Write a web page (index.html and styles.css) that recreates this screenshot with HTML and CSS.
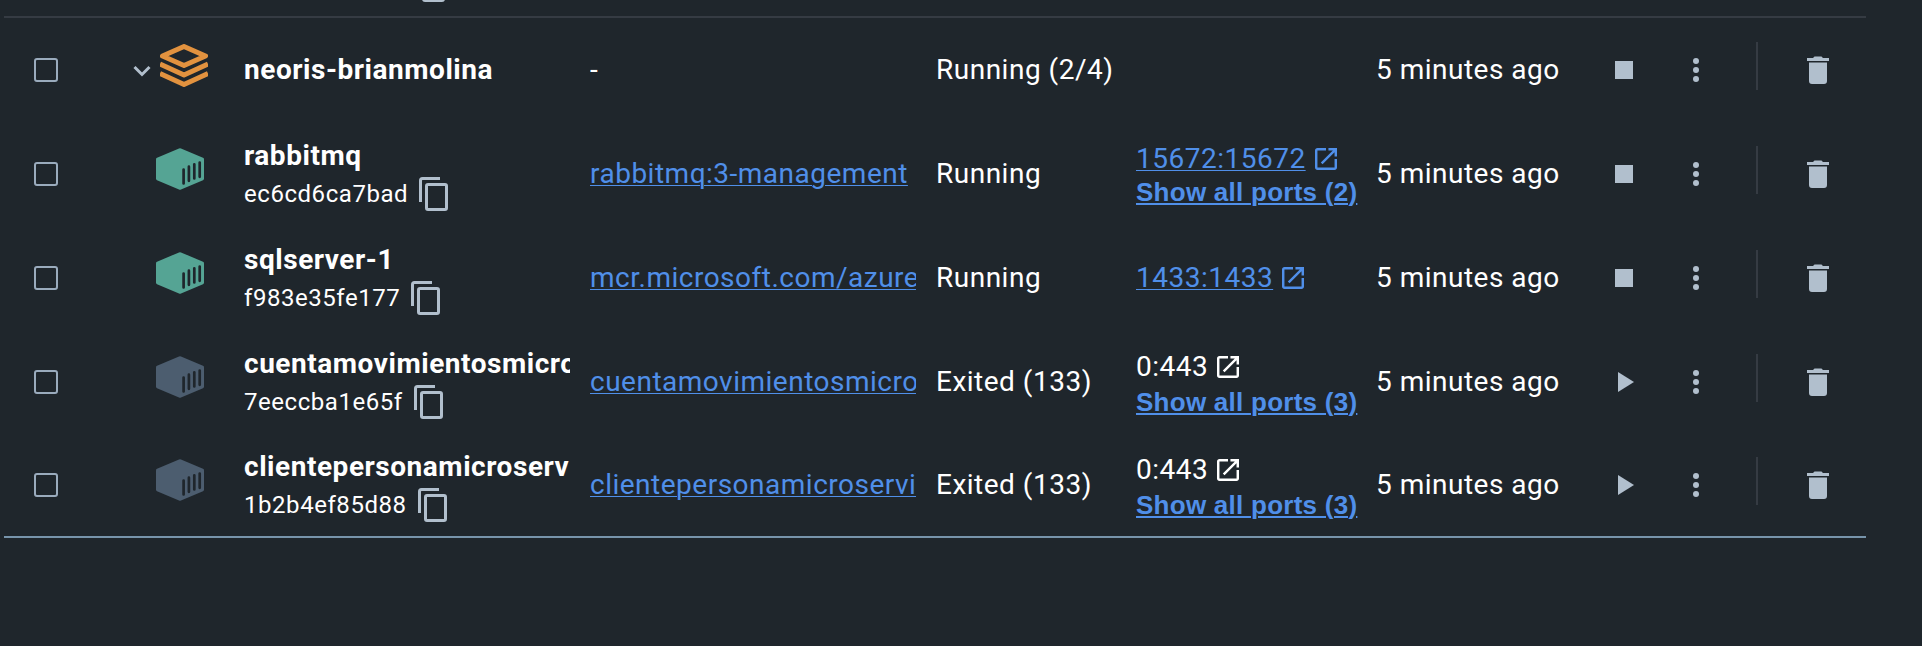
FILE: index.html
```html
<!DOCTYPE html>
<html lang="en">
<head>
<meta charset="utf-8">
<title>Containers</title>
<link rel="stylesheet" href="styles.css">
</head>
<body>
<svg class="defs" width="0" height="0">
  <symbol id="box" viewBox="0 0 48 42"><path fill="currentColor" d="M23 .4Q24 0 25 .4L47 9.800Q48 10.300 48 11.200V30.800Q48 31.700 47 32.200L25 41.600Q24 42 23 41.600L1 32.200Q0 31.700 0 30.800V11.200Q0 10.300 1 9.800Z"/><path class="slots" d="M27.600 21.500V35.500M32.900 18.700V32.800M38.300 16.300V30.500M43.700 14.500V28.800"/></symbol>
  <symbol id="copy" viewBox="0 0 30 34"><path fill="none" stroke="currentColor" stroke-width="3" d="M1.500 25V3.500Q1.500 1.500 3.500 1.500H21"/><rect x="7.500" y="7.500" width="20" height="25" rx="1.500" fill="none" stroke="currentColor" stroke-width="3"/></symbol>
  <symbol id="open" viewBox="3 3 18 18"><path fill="currentColor" d="M19 19H5V5h7V3H5c-1.110 0-2 .9-2 2v14c0 1.100.89 2 2 2h14c1.100 0 2-.9 2-2v-7h-2v7zM14 3v2h3.590l-9.830 9.830 1.410 1.410L19 6.410V10h2V3h-7z"/></symbol>
  <symbol id="dots" viewBox="0 0 6 24"><circle cx="3" cy="3" r="3" fill="currentColor"/><circle cx="3" cy="12" r="3" fill="currentColor"/><circle cx="3" cy="21" r="3" fill="currentColor"/></symbol>
  <symbol id="trash" viewBox="0 0 22 28"><path fill="currentColor" d="M0 2H6L7.500 .5H14.500L16 2H22V5H0ZM2 6.500H20V25Q20 28 17 28H5Q2 28 2 25Z"/></symbol>
</svg>
<main class="table">
  <header class="head"><svg class="copy"><use href="#copy"/></svg></header>
  <section class="row">
    <i class="check"></i>
    <div class="kind group"><svg class="chevron" viewBox="0 0 18 12"><path d="M1.500 2 9 9.500 16.500 2"/></svg><svg class="stack" viewBox="0 0 48 44"><path d="M24 2.500 45.500 12 24 21.500 2.500 12ZM0 20 24 31 48 20M0 29.500 24 40.500 48 29.500"/></svg></div>
    <div class="name"><b>neoris-brianmolina</b></div>
    <div class="image">-</div><div>Running (2/4)</div><div class="ports"></div><div>5 minutes ago</div>
    <div class="actions"><i class="stop"></i><svg class="dots"><use href="#dots"/></svg><i class="rule"></i><svg class="trash"><use href="#trash"/></svg></div>
  </section>
  <section class="row">
    <i class="check"></i>
    <div class="kind on"><svg class="box"><use href="#box"/></svg></div>
    <div class="name item"><b>rabbitmq</b><span class="id">ec6cd6ca7bad<svg class="copy"><use href="#copy"/></svg></span></div>
    <div class="image"><a>rabbitmq:3-management</a></div><div>Running</div>
    <div class="ports pair"><span class="port"><a>15672:15672</a><svg class="open"><use href="#open"/></svg></span><a class="all">Show all ports (2)</a></div><div>5 minutes ago</div>
    <div class="actions"><i class="stop"></i><svg class="dots"><use href="#dots"/></svg><i class="rule"></i><svg class="trash"><use href="#trash"/></svg></div>
  </section>
  <section class="row">
    <i class="check"></i>
    <div class="kind on"><svg class="box"><use href="#box"/></svg></div>
    <div class="name item"><b>sqlserver-1</b><span class="id">f983e35fe177<svg class="copy"><use href="#copy"/></svg></span></div>
    <div class="image"><a>mcr.microsoft.com/azure</a></div><div>Running</div>
    <div class="ports"><span class="port"><a>1433:1433</a><svg class="open"><use href="#open"/></svg></span></div><div>5 minutes ago</div>
    <div class="actions"><i class="stop"></i><svg class="dots"><use href="#dots"/></svg><i class="rule"></i><svg class="trash"><use href="#trash"/></svg></div>
  </section>
  <section class="row">
    <i class="check"></i>
    <div class="kind"><svg class="box"><use href="#box"/></svg></div>
    <div class="name item"><b>cuentamovimientosmicro</b><span class="id">7eeccba1e65f<svg class="copy"><use href="#copy"/></svg></span></div>
    <div class="image"><a>cuentamovimientosmicro</a></div><div>Exited (133)</div>
    <div class="ports pair closed"><span class="port">0:443<svg class="open"><use href="#open"/></svg></span><a class="all">Show all ports (3)</a></div><div>5 minutes ago</div>
    <div class="actions"><svg class="play" viewBox="0 0 16 20"><path fill="currentColor" d="M0 0 16 10 0 20Z"/></svg><svg class="dots"><use href="#dots"/></svg><i class="rule"></i><svg class="trash"><use href="#trash"/></svg></div>
  </section>
  <section class="row last">
    <i class="check"></i>
    <div class="kind"><svg class="box"><use href="#box"/></svg></div>
    <div class="name item"><b>clientepersonamicroserv</b><span class="id">1b2b4ef85d88<svg class="copy"><use href="#copy"/></svg></span></div>
    <div class="image"><a>clientepersonamicroservi</a></div><div>Exited (133)</div>
    <div class="ports pair closed"><span class="port">0:443<svg class="open"><use href="#open"/></svg></span><a class="all">Show all ports (3)</a></div><div>5 minutes ago</div>
    <div class="actions"><svg class="play" viewBox="0 0 16 20"><path fill="currentColor" d="M0 0 16 10 0 20Z"/></svg><svg class="dots"><use href="#dots"/></svg><i class="rule"></i><svg class="trash"><use href="#trash"/></svg></div>
  </section>
</main>
</body>
</html>
```
FILE: styles.css
```css
* { box-sizing: border-box; }
body { margin: 0; height: 646px; overflow: hidden; background: #1f262c; color: #fff; font: 28px/32px Roboto, sans-serif; letter-spacing: 0.5px; }
svg { display: block; flex: none; }
.defs { position: absolute; }
.table { width: 1862px; margin-left: 4px; border-bottom: 2px solid #7794ab; }
.head { height: 18px; border-bottom: 2px solid #353b43; display: flex; align-items: flex-end; overflow: hidden; padding: 0 0 14px 412px; color: #b1bfcd; }
.row { height: 104px; display: grid; grid-template-columns: 24px 186px 346px 346px 200px 240px 239px 1fr; grid-template-rows: 100%; padding-left: 30px; align-items: center; white-space: nowrap; }
.last { height: 102px; }
.check { width: 24px; height: 24px; border: 2.500px solid #9aabbd; border-radius: 3px; }
.kind { padding: 0 0 10px 98px; color: #4c5d6f; }
.on { color: #55a494; }
.box { width: 48px; height: 42px; }
.slots { stroke: #1f262c; stroke-width: 2.700; stroke-linecap: round; }
.group { display: flex; align-items: center; gap: 9px; padding: 0 0 9px 75px; }
.chevron { width: 18px; height: 12px; margin-top: 10px; fill: none; stroke: #b1bfcd; stroke-width: 3; }
.stack { width: 48px; height: 44px; fill: none; stroke: #e2923f; stroke-width: 5; stroke-linejoin: round; }
.name, .image { width: 326px; overflow: hidden; }
.item { padding-top: 6px; }
.name b { display: block; font-weight: 700; letter-spacing: 0.54px; }
.id { display: flex; align-items: center; height: 40px; font-size: 24px; letter-spacing: 0.55px; gap: 11px; margin-top: 2px; }
.copy { width: 30px; height: 34px; color: #b1bfcd; }
a { color: #508fe9; text-decoration: underline; text-decoration-thickness: 1px; text-underline-offset: 2px; }
.port { display: flex; align-items: center; gap: 9px; color: #508fe9; }
.pair { padding-top: 4px; }
.closed { padding-top: 5px; }
.closed .port { color: #fff; }
.closed .all { margin-top: 2px; }
.open { width: 22px; height: 22px; }
.all { display: block; font: 700 26px/34px "Liberation Sans", sans-serif; letter-spacing: 0.26px; text-decoration-thickness: 2px; }
.actions { display: flex; align-items: center; color: #b1bfcd; }
.stop { width: 18px; height: 18px; background: currentColor; margin-right: 60px; }
.play { width: 16px; height: 20px; margin: 0 59px 0 3px; }
.dots { width: 6px; height: 24px; }
.rule { width: 2px; height: 48px; background: #353b43; margin: 0 49px 8px 57px; }
.trash { width: 22px; height: 28px; }
```
